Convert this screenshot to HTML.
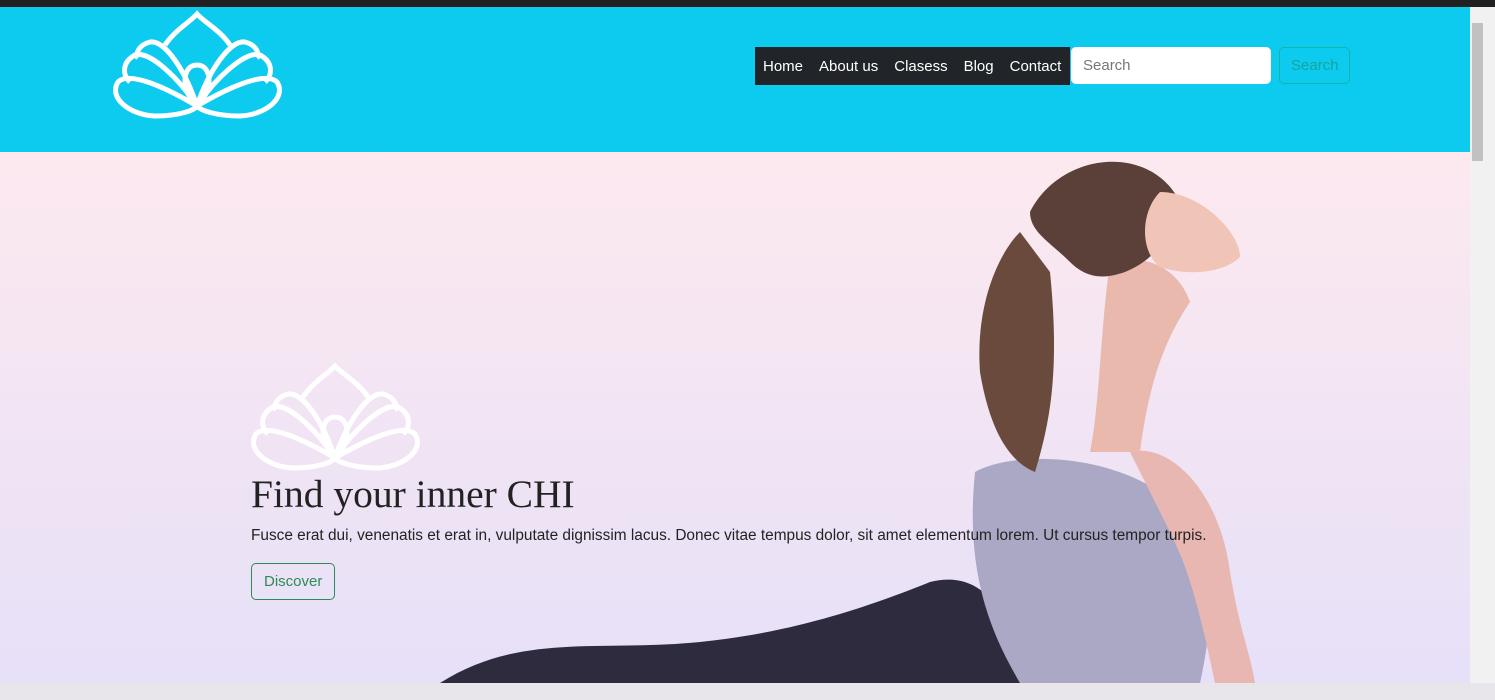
<!DOCTYPE html>
<html><head><style>
*{margin:0;padding:0;box-sizing:border-box}
body{width:1495px;height:700px;overflow:hidden;font-family:"Liberation Sans",sans-serif;background:#fff;position:relative}
.top{position:absolute;left:0;top:0;width:1495px;height:7px;background:#202020}
.hdr{position:absolute;left:0;top:7px;width:1470px;height:145px;background:#0ccbef}
.sb{position:absolute;left:1470px;top:7px;width:25px;height:676px;background:#f1f1f1}
.sb i{position:absolute;left:2px;top:16px;width:11px;height:138px;background:#c1c1c1}
.hero{position:absolute;left:0;top:152px;width:1470px;height:531px;background:linear-gradient(#fde9ef,#e6e0f8)}
.nav{position:absolute;left:755px;top:47px;width:315px;height:38px;background:#212529;color:#fff;font-size:15px;display:flex;align-items:center;gap:16px;padding-left:8px}
.inp{position:absolute;left:1071px;top:47px;width:200px;height:37px;background:#fff;border-radius:5px;color:#777;font-size:15px;padding:10px 12px}
.btn{position:absolute;left:1279px;top:47px;width:71px;height:37px;border:1px solid #14b5a8;border-radius:5px;color:#14a59b;font-size:15px;padding:9px 11px}
h1{position:absolute;left:251px;top:471px;font-family:"Liberation Serif",serif;font-weight:normal;font-size:39.5px;color:#222}
p{position:absolute;left:251px;top:527px;font-size:15.4px;color:#222}
.disc{position:absolute;left:251px;top:563px;width:84px;height:37px;border:1px solid #2e8b57;border-radius:5px;color:#2e8b57;font-size:15px;padding:9px 12px}
.task{position:absolute;left:0;top:683px;width:1495px;height:17px;background:#e8e6ea}
</style></head><body>
<div class="top"></div>
<div class="hdr"></div>
<svg style="position:absolute;left:110px;top:10px" width="175" height="112" viewBox="0 0 175 112" fill="none" stroke="#fff" stroke-width="5">
<path d="M87 96 C60 80 20 60 8 72 C-2 88 20 105 45 106 C70 106 85 100 87 96Z"/>
<path d="M87 96 C114 80 155 60 167 72 C177 88 155 105 130 106 C105 106 90 100 87 96Z"/>
<path d="M87 96 C70 70 40 40 25 45 C12 52 12 65 20 72"/>
<path d="M87 96 C104 70 135 40 150 45 C163 52 163 65 155 72"/>
<path d="M87 96 C75 60 55 30 40 32 C28 35 25 45 28 48"/>
<path d="M87 96 C99 60 120 30 135 32 C147 35 150 45 147 48"/>
<path d="M87 96 C70 80 72 55 87 55 C102 55 104 80 87 96Z"/>
<path d="M55 35 C65 20 80 12 87 4 C94 12 110 20 120 35"/>
</svg>
<div class="nav"><span>Home</span><span>About us</span><span>Clasess</span><span>Blog</span><span>Contact</span></div>
<div class="inp">Search</div>
<div class="btn">Search</div>
<div class="hero"></div>
<svg style="position:absolute;left:0;top:152px" width="1470" height="531">
<path d="M440 531 C520 480 600 500 700 490 C800 480 880 450 930 430 C970 420 1010 440 1020 531Z" fill="#2f2b3f"/>
<path d="M975 320 C1010 300 1100 300 1160 340 C1210 380 1220 440 1200 531 L1020 531 C990 480 965 420 975 320Z" fill="#aaa8c4"/>
<path d="M1130 300 C1170 290 1220 340 1230 420 C1240 480 1250 500 1255 531 L1215 531 C1200 460 1190 420 1170 380Z" fill="#e9b7b2"/>
<path d="M1110 110 C1150 100 1180 120 1190 150 C1170 180 1150 220 1140 300 L1090 300 C1100 250 1100 180 1110 110Z" fill="#eab9ae"/>
<path d="M1030 60 C1060 0 1150 -10 1180 50 C1170 90 1150 110 1125 120 C1110 125 1090 130 1070 110 C1050 90 1030 80 1030 60Z" fill="#5a4038"/>
<path d="M1020 80 C1000 100 975 150 980 220 C990 280 1010 310 1035 320 C1050 270 1060 220 1050 120Z" fill="#6b4a3e"/>
<path d="M1160 40 C1200 40 1240 80 1240 105 C1225 120 1190 125 1160 115 C1140 100 1140 60 1160 40Z" fill="#f0c4b6"/>
</svg>
<svg style="position:absolute;left:248px;top:362px" width="175" height="112" viewBox="0 0 175 112" fill="none" stroke="#fff" stroke-width="5">
<path d="M87 96 C60 80 20 60 8 72 C-2 88 20 105 45 106 C70 106 85 100 87 96Z"/>
<path d="M87 96 C114 80 155 60 167 72 C177 88 155 105 130 106 C105 106 90 100 87 96Z"/>
<path d="M87 96 C70 70 40 40 25 45 C12 52 12 65 20 72"/>
<path d="M87 96 C104 70 135 40 150 45 C163 52 163 65 155 72"/>
<path d="M87 96 C75 60 55 30 40 32 C28 35 25 45 28 48"/>
<path d="M87 96 C99 60 120 30 135 32 C147 35 150 45 147 48"/>
<path d="M87 96 C70 80 72 55 87 55 C102 55 104 80 87 96Z"/>
<path d="M55 35 C65 20 80 12 87 4 C94 12 110 20 120 35"/>
</svg>
<h1>Find your inner CHI</h1>
<p>Fusce erat dui, venenatis et erat in, vulputate dignissim lacus. Donec vitae tempus dolor, sit amet elementum lorem. Ut cursus tempor turpis.</p>
<div class="disc">Discover</div>
<div class="sb"><i></i></div>
<div class="task"></div>
</body></html>
